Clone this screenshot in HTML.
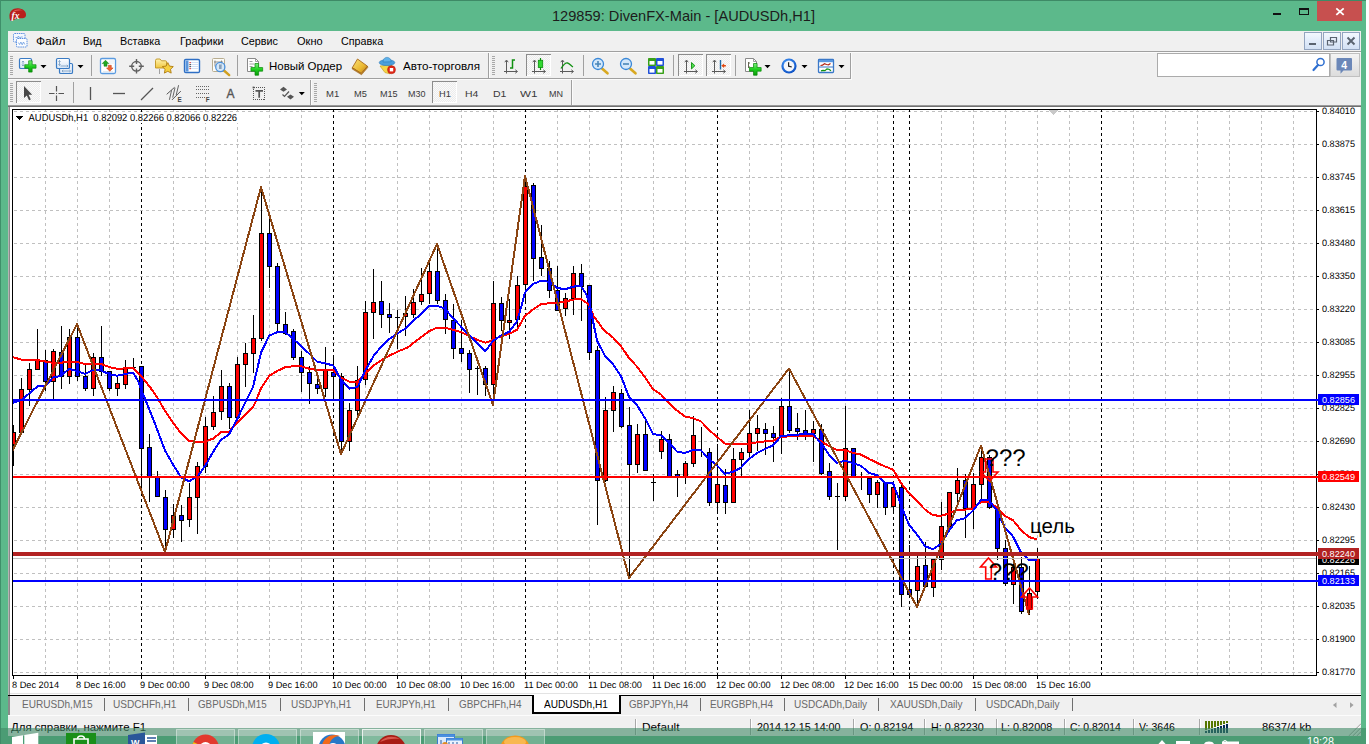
<!DOCTYPE html>
<html><head><meta charset="utf-8"><title>MT4</title>
<style>
*{box-sizing:border-box;margin:0;padding:0}
html,body{width:1369px;height:744px;overflow:hidden;background:#fff}
body{font-family:"Liberation Sans",sans-serif;font-size:12px;color:#000;position:relative}
.abs{position:absolute}
#win{position:absolute;left:0;top:0;width:1366px;height:744px;background:#5cb98b;overflow:hidden}
#topline{position:absolute;left:0;top:0;width:1366px;height:1px;background:#3e8a66}
#title{position:absolute;left:0;top:5px;width:1366px;text-align:center;font-size:15px;line-height:20px;color:#111;letter-spacing:0.1px}
#closeb{position:absolute;left:1317px;top:1px;width:45px;height:20px;background:#c7504f}
#content{position:absolute;left:8px;top:31px;width:1353px;height:705px;background:#f0f0f0}
.menu span{position:absolute;top:35px;font-size:12px;line-height:14px;white-space:nowrap}
.hsep{position:absolute;left:8px;width:1353px;height:1px;background:#a0a0a0}
.vsep{position:absolute;width:1px;background:#a0a0a0}
.grip{position:absolute;width:3px;height:20px;background:repeating-linear-gradient(to bottom,#b0b0b0 0,#b0b0b0 1px,transparent 1px,transparent 2px)}
.tb{position:absolute;font-size:12px;line-height:14px;white-space:nowrap}
.tf span{position:absolute;top:88px;font-size:10px;line-height:12px;color:#333;white-space:nowrap;letter-spacing:0.2px}
.tab{position:absolute;top:697px;font-size:12px;line-height:14px;color:#666;white-space:nowrap}
.tsep{position:absolute;top:697px;width:1px;height:12px;background:#777}
.st{position:absolute;top:720px;font-size:12px;line-height:14px;color:#222;white-space:nowrap}
.ssep{position:absolute;top:715px;width:1px;height:18px;background:#b8b8b8}
</style></head><body>
<div id="win">
<div id="topline"></div>
<div id="closeb"></div>
<div id="content"></div>
<svg class="abs" style="left:0;top:0" width="1369" height="744" viewBox="0 0 1369 744" shape-rendering="crispEdges" font-family="Liberation Sans, sans-serif">
<rect x="8" y="105" width="1353" height="1" fill="#9a9a9a"/>
<rect x="8" y="106" width="1353" height="1" fill="#6f6f6f"/>
<rect x="8" y="107" width="1" height="588" fill="#b4b4b4"/>
<rect x="9" y="107" width="1" height="588" fill="#8a8a8a"/>
<rect x="10" y="107" width="1350" height="586" fill="#ffffff"/>
<rect x="1360" y="107" width="1" height="588" fill="#e3e3e3"/>
<rect x="10" y="693" width="1351" height="1" fill="#e3e3e3"/>
<rect x="10" y="694" width="1351" height="1" fill="#ffffff"/>
<rect x="8" y="695" width="1353" height="1" fill="#000000"/>
<g stroke="#c0c0c0" stroke-width="1" stroke-dasharray="3 3">
<line x1="14" y1="111.5" x2="1316" y2="111.5"/>
<line x1="14" y1="144.5" x2="1316" y2="144.5"/>
<line x1="14" y1="177.5" x2="1316" y2="177.5"/>
<line x1="14" y1="210.5" x2="1316" y2="210.5"/>
<line x1="14" y1="243.5" x2="1316" y2="243.5"/>
<line x1="14" y1="276.5" x2="1316" y2="276.5"/>
<line x1="14" y1="309.5" x2="1316" y2="309.5"/>
<line x1="14" y1="342.5" x2="1316" y2="342.5"/>
<line x1="14" y1="375.5" x2="1316" y2="375.5"/>
<line x1="14" y1="408.5" x2="1316" y2="408.5"/>
<line x1="14" y1="441.5" x2="1316" y2="441.5"/>
<line x1="14" y1="474.5" x2="1316" y2="474.5"/>
<line x1="14" y1="507.5" x2="1316" y2="507.5"/>
<line x1="14" y1="540.5" x2="1316" y2="540.5"/>
<line x1="14" y1="573.5" x2="1316" y2="573.5"/>
<line x1="14" y1="606.5" x2="1316" y2="606.5"/>
<line x1="14" y1="639.5" x2="1316" y2="639.5"/>
<line x1="14" y1="672.5" x2="1316" y2="672.5"/>
<line x1="45.5" y1="109" x2="45.5" y2="675" stroke-dashoffset="0"/>
<line x1="77.5" y1="109" x2="77.5" y2="675" stroke-dashoffset="0"/>
<line x1="109.5" y1="109" x2="109.5" y2="675" stroke-dashoffset="0"/>
<line x1="173.5" y1="109" x2="173.5" y2="675" stroke-dashoffset="0"/>
<line x1="205.5" y1="109" x2="205.5" y2="675" stroke-dashoffset="0"/>
<line x1="237.5" y1="109" x2="237.5" y2="675" stroke-dashoffset="0"/>
<line x1="269.5" y1="109" x2="269.5" y2="675" stroke-dashoffset="0"/>
<line x1="301.5" y1="109" x2="301.5" y2="675" stroke-dashoffset="0"/>
<line x1="365.5" y1="109" x2="365.5" y2="675" stroke-dashoffset="0"/>
<line x1="397.5" y1="109" x2="397.5" y2="675" stroke-dashoffset="0"/>
<line x1="429.5" y1="109" x2="429.5" y2="675" stroke-dashoffset="0"/>
<line x1="461.5" y1="109" x2="461.5" y2="675" stroke-dashoffset="0"/>
<line x1="493.5" y1="109" x2="493.5" y2="675" stroke-dashoffset="0"/>
<line x1="557.5" y1="109" x2="557.5" y2="675" stroke-dashoffset="0"/>
<line x1="589.5" y1="109" x2="589.5" y2="675" stroke-dashoffset="0"/>
<line x1="621.5" y1="109" x2="621.5" y2="675" stroke-dashoffset="0"/>
<line x1="653.5" y1="109" x2="653.5" y2="675" stroke-dashoffset="0"/>
<line x1="685.5" y1="109" x2="685.5" y2="675" stroke-dashoffset="0"/>
<line x1="749.5" y1="109" x2="749.5" y2="675" stroke-dashoffset="0"/>
<line x1="781.5" y1="109" x2="781.5" y2="675" stroke-dashoffset="0"/>
<line x1="813.5" y1="109" x2="813.5" y2="675" stroke-dashoffset="0"/>
<line x1="845.5" y1="109" x2="845.5" y2="675" stroke-dashoffset="0"/>
<line x1="877.5" y1="109" x2="877.5" y2="675" stroke-dashoffset="0"/>
<line x1="941.5" y1="109" x2="941.5" y2="675" stroke-dashoffset="0"/>
<line x1="973.5" y1="109" x2="973.5" y2="675" stroke-dashoffset="0"/>
<line x1="1005.5" y1="109" x2="1005.5" y2="675" stroke-dashoffset="0"/>
<line x1="1037.5" y1="109" x2="1037.5" y2="675" stroke-dashoffset="0"/>
<line x1="1069.5" y1="109" x2="1069.5" y2="675" stroke-dashoffset="0"/>
<line x1="1133.5" y1="109" x2="1133.5" y2="675" stroke-dashoffset="0"/>
<line x1="1165.5" y1="109" x2="1165.5" y2="675" stroke-dashoffset="0"/>
<line x1="1197.5" y1="109" x2="1197.5" y2="675" stroke-dashoffset="0"/>
<line x1="1229.5" y1="109" x2="1229.5" y2="675" stroke-dashoffset="0"/>
<line x1="1261.5" y1="109" x2="1261.5" y2="675" stroke-dashoffset="0"/>
<line x1="1293.5" y1="109" x2="1293.5" y2="675" stroke-dashoffset="0"/>
</g>
<g stroke="#000" stroke-width="1" stroke-dasharray="3 3">
<line x1="141.5" y1="109" x2="141.5" y2="675"/>
<line x1="333.5" y1="109" x2="333.5" y2="675"/>
<line x1="525.5" y1="109" x2="525.5" y2="675"/>
<line x1="717.5" y1="109" x2="717.5" y2="675"/>
<line x1="893.5" y1="109" x2="893.5" y2="675"/>
<line x1="909.5" y1="109" x2="909.5" y2="675"/>
<line x1="1101.5" y1="109" x2="1101.5" y2="675"/>
</g>
<path d="M1049 110 L1058 110 L1053.5 115 Z" fill="#c8c8c8"/>
<rect x="12" y="109" width="1305" height="1" fill="#000"/>
<rect x="12" y="675" width="1305" height="1" fill="#000"/>
<rect x="12" y="109" width="1" height="567" fill="#000"/>
<rect x="1316" y="109" width="1" height="567" fill="#000"/>
<rect x="1317" y="111" width="2" height="1" fill="#000"/>
<rect x="1317" y="144" width="2" height="1" fill="#000"/>
<rect x="1317" y="177" width="2" height="1" fill="#000"/>
<rect x="1317" y="210" width="2" height="1" fill="#000"/>
<rect x="1317" y="243" width="2" height="1" fill="#000"/>
<rect x="1317" y="276" width="2" height="1" fill="#000"/>
<rect x="1317" y="309" width="2" height="1" fill="#000"/>
<rect x="1317" y="342" width="2" height="1" fill="#000"/>
<rect x="1317" y="375" width="2" height="1" fill="#000"/>
<rect x="1317" y="408" width="2" height="1" fill="#000"/>
<rect x="1317" y="441" width="2" height="1" fill="#000"/>
<rect x="1317" y="474" width="2" height="1" fill="#000"/>
<rect x="1317" y="507" width="2" height="1" fill="#000"/>
<rect x="1317" y="540" width="2" height="1" fill="#000"/>
<rect x="1317" y="573" width="2" height="1" fill="#000"/>
<rect x="1317" y="606" width="2" height="1" fill="#000"/>
<rect x="1317" y="639" width="2" height="1" fill="#000"/>
<rect x="1317" y="672" width="2" height="1" fill="#000"/>
<rect x="13" y="676" width="1" height="3" fill="#000"/>
<rect x="77" y="676" width="1" height="3" fill="#000"/>
<rect x="141" y="676" width="1" height="3" fill="#000"/>
<rect x="205" y="676" width="1" height="3" fill="#000"/>
<rect x="269" y="676" width="1" height="3" fill="#000"/>
<rect x="333" y="676" width="1" height="3" fill="#000"/>
<rect x="397" y="676" width="1" height="3" fill="#000"/>
<rect x="461" y="676" width="1" height="3" fill="#000"/>
<rect x="525" y="676" width="1" height="3" fill="#000"/>
<rect x="589" y="676" width="1" height="3" fill="#000"/>
<rect x="653" y="676" width="1" height="3" fill="#000"/>
<rect x="717" y="676" width="1" height="3" fill="#000"/>
<rect x="781" y="676" width="1" height="3" fill="#000"/>
<rect x="845" y="676" width="1" height="3" fill="#000"/>
<rect x="909" y="676" width="1" height="3" fill="#000"/>
<rect x="973" y="676" width="1" height="3" fill="#000"/>
<rect x="1037" y="676" width="1" height="3" fill="#000"/>
<clipPath id="cp"><rect x="13" y="110" width="1303" height="565"/></clipPath>
<g clip-path="url(#cp)">
<rect x="13" y="425" width="1" height="41" fill="#000"/>
<rect x="11" y="432" width="5" height="13" fill="#000"/>
<rect x="12" y="433" width="3" height="11" fill="#ff0000"/>
<rect x="21" y="378" width="1" height="55" fill="#000"/>
<rect x="19" y="389" width="5" height="44" fill="#000"/>
<rect x="20" y="390" width="3" height="42" fill="#ff0000"/>
<rect x="29" y="363" width="1" height="43" fill="#000"/>
<rect x="27" y="369" width="5" height="21" fill="#000"/>
<rect x="28" y="370" width="3" height="19" fill="#ff0000"/>
<rect x="37" y="329" width="1" height="41" fill="#000"/>
<rect x="35" y="360" width="5" height="10" fill="#000"/>
<rect x="36" y="361" width="3" height="8" fill="#ff0000"/>
<rect x="45" y="350" width="1" height="41" fill="#000"/>
<rect x="43" y="360" width="5" height="22" fill="#000"/>
<rect x="44" y="361" width="3" height="20" fill="#0000ff"/>
<rect x="53" y="349" width="1" height="51" fill="#000"/>
<rect x="51" y="351" width="5" height="31" fill="#000"/>
<rect x="52" y="352" width="3" height="29" fill="#ff0000"/>
<rect x="61" y="326" width="1" height="63" fill="#000"/>
<rect x="59" y="352" width="5" height="25" fill="#000"/>
<rect x="60" y="353" width="3" height="23" fill="#0000ff"/>
<rect x="69" y="329" width="1" height="55" fill="#000"/>
<rect x="67" y="337" width="5" height="40" fill="#000"/>
<rect x="68" y="338" width="3" height="38" fill="#ff0000"/>
<rect x="77" y="324" width="1" height="57" fill="#000"/>
<rect x="75" y="337" width="5" height="40" fill="#000"/>
<rect x="76" y="338" width="3" height="38" fill="#0000ff"/>
<rect x="85" y="364" width="1" height="27" fill="#000"/>
<rect x="83" y="376" width="5" height="13" fill="#000"/>
<rect x="84" y="377" width="3" height="11" fill="#0000ff"/>
<rect x="93" y="353" width="1" height="43" fill="#000"/>
<rect x="91" y="357" width="5" height="32" fill="#000"/>
<rect x="92" y="358" width="3" height="30" fill="#ff0000"/>
<rect x="101" y="326" width="1" height="50" fill="#000"/>
<rect x="99" y="357" width="5" height="15" fill="#000"/>
<rect x="100" y="358" width="3" height="13" fill="#0000ff"/>
<rect x="109" y="371" width="1" height="20" fill="#000"/>
<rect x="107" y="371" width="5" height="18" fill="#000"/>
<rect x="108" y="372" width="3" height="16" fill="#0000ff"/>
<rect x="117" y="377" width="1" height="19" fill="#000"/>
<rect x="115" y="383" width="5" height="6" fill="#000"/>
<rect x="116" y="384" width="3" height="4" fill="#ff0000"/>
<rect x="125" y="360" width="1" height="29" fill="#000"/>
<rect x="123" y="367" width="5" height="18" fill="#000"/>
<rect x="124" y="368" width="3" height="16" fill="#ff0000"/>
<rect x="133" y="358" width="1" height="12" fill="#000"/>
<rect x="131" y="367" width="5" height="1" fill="#000"/>
<rect x="141" y="366" width="1" height="127" fill="#000"/>
<rect x="139" y="366" width="5" height="83" fill="#000"/>
<rect x="140" y="367" width="3" height="81" fill="#0000ff"/>
<rect x="149" y="434" width="1" height="68" fill="#000"/>
<rect x="147" y="447" width="5" height="30" fill="#000"/>
<rect x="148" y="448" width="3" height="28" fill="#0000ff"/>
<rect x="157" y="471" width="1" height="26" fill="#000"/>
<rect x="155" y="476" width="5" height="21" fill="#000"/>
<rect x="156" y="477" width="3" height="19" fill="#0000ff"/>
<rect x="165" y="490" width="1" height="63" fill="#000"/>
<rect x="163" y="497" width="5" height="33" fill="#000"/>
<rect x="164" y="498" width="3" height="31" fill="#0000ff"/>
<rect x="173" y="504" width="1" height="34" fill="#000"/>
<rect x="171" y="515" width="5" height="15" fill="#000"/>
<rect x="172" y="516" width="3" height="13" fill="#ff0000"/>
<rect x="181" y="505" width="1" height="37" fill="#000"/>
<rect x="179" y="515" width="5" height="6" fill="#000"/>
<rect x="180" y="516" width="3" height="4" fill="#0000ff"/>
<rect x="189" y="483" width="1" height="44" fill="#000"/>
<rect x="187" y="497" width="5" height="23" fill="#000"/>
<rect x="188" y="498" width="3" height="21" fill="#ff0000"/>
<rect x="197" y="462" width="1" height="72" fill="#000"/>
<rect x="195" y="466" width="5" height="32" fill="#000"/>
<rect x="196" y="467" width="3" height="30" fill="#ff0000"/>
<rect x="205" y="417" width="1" height="56" fill="#000"/>
<rect x="203" y="426" width="5" height="41" fill="#000"/>
<rect x="204" y="427" width="3" height="39" fill="#ff0000"/>
<rect x="213" y="396" width="1" height="34" fill="#000"/>
<rect x="211" y="412" width="5" height="15" fill="#000"/>
<rect x="212" y="413" width="3" height="13" fill="#ff0000"/>
<rect x="221" y="370" width="1" height="50" fill="#000"/>
<rect x="219" y="386" width="5" height="26" fill="#000"/>
<rect x="220" y="387" width="3" height="24" fill="#ff0000"/>
<rect x="229" y="383" width="1" height="46" fill="#000"/>
<rect x="227" y="386" width="5" height="32" fill="#000"/>
<rect x="228" y="387" width="3" height="30" fill="#0000ff"/>
<rect x="237" y="357" width="1" height="61" fill="#000"/>
<rect x="235" y="364" width="5" height="54" fill="#000"/>
<rect x="236" y="365" width="3" height="52" fill="#ff0000"/>
<rect x="245" y="343" width="1" height="44" fill="#000"/>
<rect x="243" y="353" width="5" height="12" fill="#000"/>
<rect x="244" y="354" width="3" height="10" fill="#ff0000"/>
<rect x="253" y="315" width="1" height="58" fill="#000"/>
<rect x="251" y="338" width="5" height="16" fill="#000"/>
<rect x="252" y="339" width="3" height="14" fill="#ff0000"/>
<rect x="261" y="187" width="1" height="154" fill="#000"/>
<rect x="259" y="233" width="5" height="106" fill="#000"/>
<rect x="260" y="234" width="3" height="104" fill="#ff0000"/>
<rect x="269" y="217" width="1" height="71" fill="#000"/>
<rect x="267" y="233" width="5" height="34" fill="#000"/>
<rect x="268" y="234" width="3" height="32" fill="#0000ff"/>
<rect x="277" y="263" width="1" height="70" fill="#000"/>
<rect x="275" y="266" width="5" height="58" fill="#000"/>
<rect x="276" y="267" width="3" height="56" fill="#0000ff"/>
<rect x="285" y="312" width="1" height="23" fill="#000"/>
<rect x="283" y="324" width="5" height="10" fill="#000"/>
<rect x="284" y="325" width="3" height="8" fill="#0000ff"/>
<rect x="293" y="329" width="1" height="31" fill="#000"/>
<rect x="291" y="331" width="5" height="27" fill="#000"/>
<rect x="292" y="332" width="3" height="25" fill="#0000ff"/>
<rect x="301" y="351" width="1" height="41" fill="#000"/>
<rect x="299" y="357" width="5" height="16" fill="#000"/>
<rect x="300" y="358" width="3" height="14" fill="#0000ff"/>
<rect x="309" y="366" width="1" height="38" fill="#000"/>
<rect x="307" y="372" width="5" height="12" fill="#000"/>
<rect x="308" y="373" width="3" height="10" fill="#0000ff"/>
<rect x="317" y="379" width="1" height="15" fill="#000"/>
<rect x="315" y="384" width="5" height="5" fill="#000"/>
<rect x="316" y="385" width="3" height="3" fill="#0000ff"/>
<rect x="325" y="347" width="1" height="50" fill="#000"/>
<rect x="323" y="370" width="5" height="19" fill="#000"/>
<rect x="324" y="371" width="3" height="17" fill="#ff0000"/>
<rect x="333" y="355" width="1" height="45" fill="#000"/>
<rect x="331" y="372" width="5" height="5" fill="#000"/>
<rect x="332" y="373" width="3" height="3" fill="#0000ff"/>
<rect x="341" y="373" width="1" height="82" fill="#000"/>
<rect x="339" y="376" width="5" height="66" fill="#000"/>
<rect x="340" y="377" width="3" height="64" fill="#0000ff"/>
<rect x="349" y="403" width="1" height="48" fill="#000"/>
<rect x="347" y="410" width="5" height="32" fill="#000"/>
<rect x="348" y="411" width="3" height="30" fill="#ff0000"/>
<rect x="357" y="366" width="1" height="51" fill="#000"/>
<rect x="355" y="380" width="5" height="31" fill="#000"/>
<rect x="356" y="381" width="3" height="29" fill="#ff0000"/>
<rect x="365" y="301" width="1" height="84" fill="#000"/>
<rect x="363" y="312" width="5" height="68" fill="#000"/>
<rect x="364" y="313" width="3" height="66" fill="#ff0000"/>
<rect x="373" y="269" width="1" height="70" fill="#000"/>
<rect x="371" y="302" width="5" height="11" fill="#000"/>
<rect x="372" y="303" width="3" height="9" fill="#ff0000"/>
<rect x="381" y="281" width="1" height="47" fill="#000"/>
<rect x="379" y="301" width="5" height="14" fill="#000"/>
<rect x="380" y="302" width="3" height="12" fill="#0000ff"/>
<rect x="389" y="303" width="1" height="30" fill="#000"/>
<rect x="387" y="314" width="5" height="4" fill="#000"/>
<rect x="388" y="315" width="3" height="2" fill="#0000ff"/>
<rect x="397" y="310" width="1" height="39" fill="#000"/>
<rect x="395" y="317" width="5" height="1" fill="#000"/>
<rect x="405" y="296" width="1" height="40" fill="#000"/>
<rect x="403" y="313" width="5" height="4" fill="#000"/>
<rect x="404" y="314" width="3" height="2" fill="#ff0000"/>
<rect x="413" y="289" width="1" height="29" fill="#000"/>
<rect x="411" y="302" width="5" height="13" fill="#000"/>
<rect x="412" y="303" width="3" height="11" fill="#ff0000"/>
<rect x="421" y="268" width="1" height="37" fill="#000"/>
<rect x="419" y="294" width="5" height="8" fill="#000"/>
<rect x="420" y="295" width="3" height="6" fill="#ff0000"/>
<rect x="429" y="263" width="1" height="41" fill="#000"/>
<rect x="427" y="271" width="5" height="23" fill="#000"/>
<rect x="428" y="272" width="3" height="21" fill="#ff0000"/>
<rect x="437" y="245" width="1" height="59" fill="#000"/>
<rect x="435" y="271" width="5" height="30" fill="#000"/>
<rect x="436" y="272" width="3" height="28" fill="#0000ff"/>
<rect x="445" y="294" width="1" height="40" fill="#000"/>
<rect x="443" y="300" width="5" height="20" fill="#000"/>
<rect x="444" y="301" width="3" height="18" fill="#0000ff"/>
<rect x="453" y="304" width="1" height="55" fill="#000"/>
<rect x="451" y="320" width="5" height="29" fill="#000"/>
<rect x="452" y="321" width="3" height="27" fill="#0000ff"/>
<rect x="461" y="320" width="1" height="42" fill="#000"/>
<rect x="459" y="348" width="5" height="6" fill="#000"/>
<rect x="460" y="349" width="3" height="4" fill="#0000ff"/>
<rect x="469" y="350" width="1" height="43" fill="#000"/>
<rect x="467" y="353" width="5" height="17" fill="#000"/>
<rect x="468" y="354" width="3" height="15" fill="#0000ff"/>
<rect x="477" y="366" width="1" height="29" fill="#000"/>
<rect x="475" y="368" width="5" height="1" fill="#000"/>
<rect x="485" y="366" width="1" height="30" fill="#000"/>
<rect x="483" y="368" width="5" height="17" fill="#000"/>
<rect x="484" y="369" width="3" height="15" fill="#0000ff"/>
<rect x="493" y="281" width="1" height="125" fill="#000"/>
<rect x="491" y="303" width="5" height="82" fill="#000"/>
<rect x="492" y="304" width="3" height="80" fill="#ff0000"/>
<rect x="501" y="297" width="1" height="34" fill="#000"/>
<rect x="499" y="303" width="5" height="18" fill="#000"/>
<rect x="500" y="304" width="3" height="16" fill="#0000ff"/>
<rect x="509" y="299" width="1" height="40" fill="#000"/>
<rect x="507" y="320" width="5" height="3" fill="#000"/>
<rect x="508" y="321" width="3" height="1" fill="#ff0000"/>
<rect x="517" y="276" width="1" height="55" fill="#000"/>
<rect x="515" y="285" width="5" height="35" fill="#000"/>
<rect x="516" y="286" width="3" height="33" fill="#ff0000"/>
<rect x="525" y="176" width="1" height="128" fill="#000"/>
<rect x="523" y="186" width="5" height="99" fill="#000"/>
<rect x="524" y="187" width="3" height="97" fill="#ff0000"/>
<rect x="533" y="183" width="1" height="98" fill="#000"/>
<rect x="531" y="185" width="5" height="74" fill="#000"/>
<rect x="532" y="186" width="3" height="72" fill="#0000ff"/>
<rect x="541" y="225" width="1" height="51" fill="#000"/>
<rect x="539" y="257" width="5" height="12" fill="#000"/>
<rect x="540" y="258" width="3" height="10" fill="#0000ff"/>
<rect x="549" y="261" width="1" height="37" fill="#000"/>
<rect x="547" y="268" width="5" height="23" fill="#000"/>
<rect x="548" y="269" width="3" height="21" fill="#0000ff"/>
<rect x="557" y="266" width="1" height="45" fill="#000"/>
<rect x="555" y="290" width="5" height="21" fill="#000"/>
<rect x="556" y="291" width="3" height="19" fill="#0000ff"/>
<rect x="565" y="293" width="1" height="23" fill="#000"/>
<rect x="563" y="298" width="5" height="11" fill="#000"/>
<rect x="564" y="299" width="3" height="9" fill="#ff0000"/>
<rect x="573" y="266" width="1" height="49" fill="#000"/>
<rect x="571" y="273" width="5" height="26" fill="#000"/>
<rect x="572" y="274" width="3" height="24" fill="#ff0000"/>
<rect x="581" y="264" width="1" height="57" fill="#000"/>
<rect x="579" y="273" width="5" height="14" fill="#000"/>
<rect x="580" y="274" width="3" height="12" fill="#0000ff"/>
<rect x="589" y="285" width="1" height="75" fill="#000"/>
<rect x="587" y="285" width="5" height="68" fill="#000"/>
<rect x="588" y="286" width="3" height="66" fill="#0000ff"/>
<rect x="597" y="346" width="1" height="179" fill="#000"/>
<rect x="595" y="350" width="5" height="131" fill="#000"/>
<rect x="596" y="351" width="3" height="129" fill="#0000ff"/>
<rect x="605" y="397" width="1" height="85" fill="#000"/>
<rect x="603" y="410" width="5" height="71" fill="#000"/>
<rect x="604" y="411" width="3" height="69" fill="#ff0000"/>
<rect x="613" y="386" width="1" height="46" fill="#000"/>
<rect x="611" y="392" width="5" height="19" fill="#000"/>
<rect x="612" y="393" width="3" height="17" fill="#ff0000"/>
<rect x="621" y="389" width="1" height="39" fill="#000"/>
<rect x="619" y="393" width="5" height="34" fill="#000"/>
<rect x="620" y="394" width="3" height="32" fill="#0000ff"/>
<rect x="629" y="407" width="1" height="172" fill="#000"/>
<rect x="627" y="425" width="5" height="40" fill="#000"/>
<rect x="628" y="426" width="3" height="38" fill="#0000ff"/>
<rect x="637" y="424" width="1" height="49" fill="#000"/>
<rect x="635" y="434" width="5" height="31" fill="#000"/>
<rect x="636" y="435" width="3" height="29" fill="#ff0000"/>
<rect x="645" y="421" width="1" height="50" fill="#000"/>
<rect x="643" y="434" width="5" height="37" fill="#000"/>
<rect x="644" y="435" width="3" height="35" fill="#0000ff"/>
<rect x="653" y="474" width="1" height="27" fill="#000"/>
<rect x="651" y="482" width="5" height="1" fill="#000"/>
<rect x="661" y="431" width="1" height="28" fill="#000"/>
<rect x="659" y="439" width="5" height="13" fill="#000"/>
<rect x="660" y="440" width="3" height="11" fill="#ff0000"/>
<rect x="669" y="434" width="1" height="43" fill="#000"/>
<rect x="667" y="439" width="5" height="38" fill="#000"/>
<rect x="668" y="440" width="3" height="36" fill="#0000ff"/>
<rect x="677" y="470" width="1" height="27" fill="#000"/>
<rect x="675" y="474" width="5" height="3" fill="#000"/>
<rect x="676" y="475" width="3" height="1" fill="#0000ff"/>
<rect x="685" y="461" width="1" height="23" fill="#000"/>
<rect x="683" y="463" width="5" height="14" fill="#000"/>
<rect x="684" y="464" width="3" height="12" fill="#ff0000"/>
<rect x="693" y="416" width="1" height="51" fill="#000"/>
<rect x="691" y="435" width="5" height="29" fill="#000"/>
<rect x="692" y="436" width="3" height="27" fill="#ff0000"/>
<rect x="701" y="427" width="1" height="30" fill="#000"/>
<rect x="709" y="448" width="1" height="58" fill="#000"/>
<rect x="707" y="452" width="5" height="51" fill="#000"/>
<rect x="708" y="453" width="3" height="49" fill="#0000ff"/>
<rect x="717" y="444" width="1" height="70" fill="#000"/>
<rect x="715" y="484" width="5" height="19" fill="#000"/>
<rect x="716" y="485" width="3" height="17" fill="#ff0000"/>
<rect x="725" y="469" width="1" height="45" fill="#000"/>
<rect x="723" y="485" width="5" height="18" fill="#000"/>
<rect x="724" y="486" width="3" height="16" fill="#0000ff"/>
<rect x="733" y="448" width="1" height="55" fill="#000"/>
<rect x="731" y="459" width="5" height="44" fill="#000"/>
<rect x="732" y="460" width="3" height="42" fill="#ff0000"/>
<rect x="741" y="448" width="1" height="29" fill="#000"/>
<rect x="739" y="452" width="5" height="8" fill="#000"/>
<rect x="740" y="453" width="3" height="6" fill="#ff0000"/>
<rect x="749" y="410" width="1" height="49" fill="#000"/>
<rect x="747" y="433" width="5" height="20" fill="#000"/>
<rect x="748" y="434" width="3" height="18" fill="#ff0000"/>
<rect x="757" y="415" width="1" height="36" fill="#000"/>
<rect x="755" y="428" width="5" height="6" fill="#000"/>
<rect x="756" y="429" width="3" height="4" fill="#ff0000"/>
<rect x="765" y="423" width="1" height="32" fill="#000"/>
<rect x="763" y="429" width="5" height="5" fill="#000"/>
<rect x="764" y="430" width="3" height="3" fill="#0000ff"/>
<rect x="773" y="426" width="1" height="36" fill="#000"/>
<rect x="771" y="433" width="5" height="5" fill="#000"/>
<rect x="772" y="434" width="3" height="3" fill="#0000ff"/>
<rect x="781" y="398" width="1" height="56" fill="#000"/>
<rect x="779" y="406" width="5" height="31" fill="#000"/>
<rect x="780" y="407" width="3" height="29" fill="#ff0000"/>
<rect x="789" y="369" width="1" height="64" fill="#000"/>
<rect x="787" y="406" width="5" height="25" fill="#000"/>
<rect x="788" y="407" width="3" height="23" fill="#0000ff"/>
<rect x="797" y="413" width="1" height="27" fill="#000"/>
<rect x="795" y="428" width="5" height="4" fill="#000"/>
<rect x="796" y="429" width="3" height="2" fill="#0000ff"/>
<rect x="805" y="410" width="1" height="30" fill="#000"/>
<rect x="803" y="430" width="5" height="4" fill="#000"/>
<rect x="804" y="431" width="3" height="2" fill="#0000ff"/>
<rect x="813" y="421" width="1" height="41" fill="#000"/>
<rect x="811" y="429" width="5" height="5" fill="#000"/>
<rect x="812" y="430" width="3" height="3" fill="#ff0000"/>
<rect x="821" y="424" width="1" height="51" fill="#000"/>
<rect x="819" y="429" width="5" height="45" fill="#000"/>
<rect x="820" y="430" width="3" height="43" fill="#0000ff"/>
<rect x="829" y="463" width="1" height="37" fill="#000"/>
<rect x="827" y="471" width="5" height="26" fill="#000"/>
<rect x="828" y="472" width="3" height="24" fill="#0000ff"/>
<rect x="837" y="483" width="1" height="67" fill="#000"/>
<rect x="835" y="496" width="5" height="1" fill="#000"/>
<rect x="845" y="406" width="1" height="95" fill="#000"/>
<rect x="843" y="448" width="5" height="49" fill="#000"/>
<rect x="844" y="449" width="3" height="47" fill="#ff0000"/>
<rect x="853" y="448" width="1" height="29" fill="#000"/>
<rect x="851" y="448" width="5" height="29" fill="#000"/>
<rect x="852" y="449" width="3" height="27" fill="#0000ff"/>
<rect x="861" y="472" width="1" height="18" fill="#000"/>
<rect x="859" y="477" width="5" height="1" fill="#000"/>
<rect x="869" y="476" width="1" height="27" fill="#000"/>
<rect x="867" y="478" width="5" height="17" fill="#000"/>
<rect x="868" y="479" width="3" height="15" fill="#0000ff"/>
<rect x="877" y="480" width="1" height="28" fill="#000"/>
<rect x="875" y="482" width="5" height="13" fill="#000"/>
<rect x="876" y="483" width="3" height="11" fill="#ff0000"/>
<rect x="885" y="482" width="1" height="33" fill="#000"/>
<rect x="883" y="482" width="5" height="26" fill="#000"/>
<rect x="884" y="483" width="3" height="24" fill="#0000ff"/>
<rect x="893" y="481" width="1" height="30" fill="#000"/>
<rect x="891" y="487" width="5" height="20" fill="#000"/>
<rect x="892" y="488" width="3" height="18" fill="#ff0000"/>
<rect x="901" y="483" width="1" height="124" fill="#000"/>
<rect x="899" y="487" width="5" height="108" fill="#000"/>
<rect x="900" y="488" width="3" height="106" fill="#0000ff"/>
<rect x="909" y="545" width="1" height="50" fill="#000"/>
<rect x="907" y="589" width="5" height="6" fill="#000"/>
<rect x="908" y="590" width="3" height="4" fill="#0000ff"/>
<rect x="917" y="556" width="1" height="52" fill="#000"/>
<rect x="915" y="566" width="5" height="25" fill="#000"/>
<rect x="916" y="567" width="3" height="23" fill="#ff0000"/>
<rect x="925" y="542" width="1" height="46" fill="#000"/>
<rect x="923" y="565" width="5" height="22" fill="#000"/>
<rect x="924" y="566" width="3" height="20" fill="#0000ff"/>
<rect x="933" y="558" width="1" height="39" fill="#000"/>
<rect x="931" y="559" width="5" height="29" fill="#000"/>
<rect x="932" y="560" width="3" height="27" fill="#ff0000"/>
<rect x="941" y="502" width="1" height="68" fill="#000"/>
<rect x="939" y="526" width="5" height="34" fill="#000"/>
<rect x="940" y="527" width="3" height="32" fill="#ff0000"/>
<rect x="949" y="492" width="1" height="36" fill="#000"/>
<rect x="947" y="492" width="5" height="35" fill="#000"/>
<rect x="948" y="493" width="3" height="33" fill="#ff0000"/>
<rect x="957" y="468" width="1" height="36" fill="#000"/>
<rect x="955" y="480" width="5" height="14" fill="#000"/>
<rect x="956" y="481" width="3" height="12" fill="#ff0000"/>
<rect x="965" y="474" width="1" height="64" fill="#000"/>
<rect x="963" y="480" width="5" height="29" fill="#000"/>
<rect x="964" y="481" width="3" height="27" fill="#0000ff"/>
<rect x="973" y="473" width="1" height="56" fill="#000"/>
<rect x="971" y="484" width="5" height="25" fill="#000"/>
<rect x="972" y="485" width="3" height="23" fill="#ff0000"/>
<rect x="981" y="445" width="1" height="55" fill="#000"/>
<rect x="979" y="457" width="5" height="28" fill="#000"/>
<rect x="980" y="458" width="3" height="26" fill="#ff0000"/>
<rect x="989" y="455" width="1" height="54" fill="#000"/>
<rect x="987" y="457" width="5" height="51" fill="#000"/>
<rect x="988" y="458" width="3" height="49" fill="#0000ff"/>
<rect x="997" y="506" width="1" height="54" fill="#000"/>
<rect x="995" y="507" width="5" height="42" fill="#000"/>
<rect x="996" y="508" width="3" height="40" fill="#0000ff"/>
<rect x="1005" y="540" width="1" height="46" fill="#000"/>
<rect x="1003" y="548" width="5" height="36" fill="#000"/>
<rect x="1004" y="549" width="3" height="34" fill="#0000ff"/>
<rect x="1013" y="561" width="1" height="43" fill="#000"/>
<rect x="1011" y="567" width="5" height="18" fill="#000"/>
<rect x="1012" y="568" width="3" height="16" fill="#ff0000"/>
<rect x="1021" y="557" width="1" height="57" fill="#000"/>
<rect x="1019" y="567" width="5" height="45" fill="#000"/>
<rect x="1020" y="568" width="3" height="43" fill="#0000ff"/>
<rect x="1029" y="566" width="1" height="49" fill="#000"/>
<rect x="1027" y="593" width="5" height="17" fill="#000"/>
<rect x="1028" y="594" width="3" height="15" fill="#ff0000"/>
<rect x="1037" y="548" width="1" height="51" fill="#000"/>
<rect x="1035" y="558" width="5" height="34" fill="#000"/>
<rect x="1036" y="559" width="3" height="32" fill="#ff0000"/>
<polyline fill="none" stroke="#ff0000" stroke-width="2" stroke-linejoin="round" points="12,357 22,359.8 37,360 53,362.8 66,362.4 77,362 85,364 101,364 109,367 117,368.8 133,368 141,376 150,387 157.5,398 165,410.8 173,422.6 181,433.3 189,440.9 197.5,442 205,441.5 213.4,438.5 221,432.3 229,431.7 237,422.6 245,415 253,406.9 256.4,400 261,388.2 269.3,375.7 277.2,371 285.4,367.1 293.4,366.2 301.3,366.2 309.3,368.8 317.2,369.9 325.4,369.9 333.4,370.3 341.3,377.8 349.3,381.7 357.5,381.7 365.6,373.1 373.6,365.6 381.5,360.2 389.7,355.5 397.7,351.6 408,347.3 413,343.3 429,331.3 437,327.6 445,327.6 453,329.8 461,332 469.2,336.2 477.4,339.9 485.4,342.7 493.3,339.9 501,336.2 509,334 517,329.8 525,315.8 533,309.6 541,304.2 549,303.3 557,302.9 565,301.7 573,299.6 581,299 589,304.7 593.5,316 600,324.6 603.7,330 613,337.5 621,346.1 629,358 637,366.6 645,377.3 653,389.1 661,394.5 669,403.1 677,410.6 685,416.5 693,418.2 701,421.4 709,430 717,436.9 725,443.5 733,444 741,444.4 749,444 757,442.3 765,441.4 773,440.7 781,437 789,436.3 797,435.7 805,435.7 813,435.7 821,441.3 829,446 837,449.9 845,449.9 853,452.9 861,454.6 869,458.9 877,462.8 885,466.5 893,469.5 901,483.1 909,493 917,501 925,509.6 933,515.2 941,515.9 949,513.5 957,509.9 965,509.6 973,508.5 981,502 989,502 997,507.4 1005,516 1013,520.3 1021,530 1029,537.1 1037,539.2"/>
<polyline fill="none" stroke="#0000ff" stroke-width="2" stroke-linejoin="round" points="12,403 22,400 29,393.5 38,386 45.6,386 53,377.4 61,376 69,368.8 77,371 85,374 93,370 101,370.5 109,374 117,375.7 125,374 133,372.7 138,380.6 142.4,392.5 146.7,403 154.2,421.5 165,450.5 173,464.5 181,477.4 189,481.3 197.5,476.3 205.4,465.6 213,452 221,439.8 229,434.4 237,419.4 245,403.2 253,387.1 261,352.7 269.3,335.5 277.2,332.3 285.4,332.3 293.4,339.1 301.3,346.2 309.3,353.8 317.2,361.7 325.4,363.4 333.4,365.6 341.3,380.6 349.3,388.6 357.5,387.1 365.6,369.9 373.6,355.9 381.5,346.2 389.7,338.7 397.7,333.3 405.6,328.4 413,321 421,314 429,306 437,305.6 445,308.8 453,318.2 461,326.6 469.2,335.2 477.4,343.3 485.4,351.3 493.3,340.5 501,335.6 509,331.9 517,321.5 521.5,305.8 525,292.5 533,284 541,280.8 549,281.8 557,287.8 565,289.4 573,286.6 581,286.1 585,292 589,300.5 593.5,323.5 597,340.6 605,355.8 613,364.4 621,376.2 629,396.7 637,405.3 645,418.2 653,433.9 661,435.4 669,442.9 677,451.5 685,453 693,450 701,450.4 709,459 717,465.5 725,473.7 733,471.9 741,467.6 749,459 757,453 765,449 773,445.3 781,436.3 789,435.3 797,434.6 805,434.2 813,434.2 821,442.8 829,454.6 837,462.8 845,460.6 853,463.2 861,465.8 869,472.9 877,475.2 885,482.8 893,483.2 897.6,495.5 901,505.3 909,524.8 917,534.5 925,546.3 933,549.1 941,544.1 949,530.6 957,520.2 965,518.2 973,510.6 981,499.9 989,500.5 997,510.6 1005,527.8 1013,536.5 1021,552.6 1029,560.1 1037,560.1"/>
<polyline fill="none" stroke="#8b4513" stroke-width="2" stroke-linejoin="round" points="5,465 77,324 165,552 261,187 341,454 437,244 493,405 525,176 629,578 789,368.5 917,607 981,445.5 1029,614.5"/>
</g>
<rect x="13" y="399" width="1305" height="2" fill="#0000ff"/>
<rect x="13" y="476" width="1305" height="2" fill="#ff0000"/>
<rect x="13" y="558" width="1303" height="1" fill="#c0c0c0"/>
<rect x="13" y="552" width="1305" height="4" fill="#b22222"/>
<rect x="13" y="580" width="1305" height="2" fill="#0000ff"/>
<path d="M988.5 558 L996.5 567 L991.3 567 L991.3 579 L985.7 579 L985.7 567 L980.5 567 Z" fill="none" stroke="#ff0000" stroke-width="1.6" shape-rendering="auto"/>
<path d="M1029.5 588 L1037.5 597 L1032.3 597 L1032.3 609 L1026.7 609 L1026.7 597 L1021.5 597 Z" fill="none" stroke="#ff0000" stroke-width="1.6" shape-rendering="auto"/>
<path d="M985.5 459 L993 459 L993 472 L998 472 L989.5 481 L981 472 L985.5 472 Z" fill="none" stroke="#ff0000" stroke-width="1.6" shape-rendering="auto"/>
<g text-rendering="geometricPrecision" shape-rendering="auto" fill="#000">
<text x="985.6" y="466.3" font-size="24">???</text>
<text x="988.8" y="579.8" font-size="24">???</text>
<text x="1030" y="533" font-size="20.5">цель</text>
<path d="M16 116 L23 116 L19.5 120 Z" fill="#000" shape-rendering="crispEdges"/>
<rect x="28" y="112" width="210" height="11" fill="#fff"/>
<text x="28.6" y="121" font-size="10.2" textLength="208.5" lengthAdjust="spacingAndGlyphs">AUDUSDh,H1&#160;&#160;0.82092 0.82266 0.82066 0.82226</text>
<text x="1322" y="114" font-size="9.4" textLength="33" lengthAdjust="spacingAndGlyphs">0.84010</text>
<text x="1322" y="147" font-size="9.4" textLength="33" lengthAdjust="spacingAndGlyphs">0.83875</text>
<text x="1322" y="180" font-size="9.4" textLength="33" lengthAdjust="spacingAndGlyphs">0.83745</text>
<text x="1322" y="213" font-size="9.4" textLength="33" lengthAdjust="spacingAndGlyphs">0.83615</text>
<text x="1322" y="246" font-size="9.4" textLength="33" lengthAdjust="spacingAndGlyphs">0.83480</text>
<text x="1322" y="279" font-size="9.4" textLength="33" lengthAdjust="spacingAndGlyphs">0.83350</text>
<text x="1322" y="312" font-size="9.4" textLength="33" lengthAdjust="spacingAndGlyphs">0.83220</text>
<text x="1322" y="345" font-size="9.4" textLength="33" lengthAdjust="spacingAndGlyphs">0.83085</text>
<text x="1322" y="378" font-size="9.4" textLength="33" lengthAdjust="spacingAndGlyphs">0.82955</text>
<text x="1322" y="411" font-size="9.4" textLength="33" lengthAdjust="spacingAndGlyphs">0.82825</text>
<text x="1322" y="444" font-size="9.4" textLength="33" lengthAdjust="spacingAndGlyphs">0.82690</text>
<text x="1322" y="477" font-size="9.4" textLength="33" lengthAdjust="spacingAndGlyphs">0.82560</text>
<text x="1322" y="510" font-size="9.4" textLength="33" lengthAdjust="spacingAndGlyphs">0.82430</text>
<text x="1322" y="543" font-size="9.4" textLength="33" lengthAdjust="spacingAndGlyphs">0.82295</text>
<text x="1322" y="576" font-size="9.4" textLength="33" lengthAdjust="spacingAndGlyphs">0.82165</text>
<text x="1322" y="609" font-size="9.4" textLength="33" lengthAdjust="spacingAndGlyphs">0.82035</text>
<text x="1322" y="642" font-size="9.4" textLength="33" lengthAdjust="spacingAndGlyphs">0.81900</text>
<text x="1322" y="675" font-size="9.4" textLength="33" lengthAdjust="spacingAndGlyphs">0.81770</text>
<text x="12" y="688" font-size="9.2">8 Dec 2014</text>
<text x="76" y="688" font-size="9.2">8 Dec 16:00</text>
<text x="140" y="688" font-size="9.2">9 Dec 00:00</text>
<text x="204" y="688" font-size="9.2">9 Dec 08:00</text>
<text x="268" y="688" font-size="9.2">9 Dec 16:00</text>
<text x="332" y="688" font-size="9.2">10 Dec 00:00</text>
<text x="396" y="688" font-size="9.2">10 Dec 08:00</text>
<text x="460" y="688" font-size="9.2">10 Dec 16:00</text>
<text x="524" y="688" font-size="9.2">11 Dec 00:00</text>
<text x="588" y="688" font-size="9.2">11 Dec 08:00</text>
<text x="652" y="688" font-size="9.2">11 Dec 16:00</text>
<text x="716" y="688" font-size="9.2">12 Dec 00:00</text>
<text x="780" y="688" font-size="9.2">12 Dec 08:00</text>
<text x="844" y="688" font-size="9.2">12 Dec 16:00</text>
<text x="908" y="688" font-size="9.2">15 Dec 00:00</text>
<text x="972" y="688" font-size="9.2">15 Dec 08:00</text>
<text x="1036" y="688" font-size="9.2">15 Dec 16:00</text>
</g>
<rect x="1318" y="394" width="41" height="11" fill="#0000ff"/>
<text x="1322" y="402.6" font-size="9.4" fill="#fff" textLength="33" lengthAdjust="spacingAndGlyphs">0.82856</text>
<rect x="1318" y="471" width="41" height="11" fill="#ff0000"/>
<text x="1322" y="479.6" font-size="9.4" fill="#fff" textLength="33" lengthAdjust="spacingAndGlyphs">0.82549</text>
<rect x="1318" y="554" width="41" height="11" fill="#000"/>
<text x="1322" y="562.6" font-size="9.4" fill="#fff" textLength="33" lengthAdjust="spacingAndGlyphs">0.82226</text>
<rect x="1318" y="548" width="41" height="11" fill="#b22222"/>
<text x="1322" y="556.6" font-size="9.4" fill="#fff" textLength="33" lengthAdjust="spacingAndGlyphs">0.82240</text>
<rect x="1318" y="575" width="41" height="11" fill="#0000ff"/>
<text x="1322" y="583.6" font-size="9.4" fill="#fff" textLength="33" lengthAdjust="spacingAndGlyphs">0.82133</text>
</svg>
<svg class="abs" style="left:0;top:0" width="1369" height="744" viewBox="0 0 1369 744" font-family="Liberation Sans, sans-serif">
<defs>
<pattern id="hatch" width="2" height="2" patternUnits="userSpaceOnUse"><rect width="2" height="2" fill="#fafafa"/><rect width="1" height="1" fill="#ececec"/><rect x="1" y="1" width="1" height="1" fill="#ececec"/></pattern>
<linearGradient id="gplus" x1="0" y1="0" x2="0" y2="1"><stop offset="0" stop-color="#7bf07b"/><stop offset="0.5" stop-color="#20d020"/><stop offset="1" stop-color="#0a9a0a"/></linearGradient>
<linearGradient id="gwin" x1="0" y1="0" x2="0" y2="1"><stop offset="0" stop-color="#ffffff"/><stop offset="1" stop-color="#d8e6f6"/></linearGradient>
<linearGradient id="gmdi" x1="0" y1="0" x2="0" y2="1"><stop offset="0" stop-color="#f4f8fe"/><stop offset="0.5" stop-color="#e2ecfa"/><stop offset="1" stop-color="#d2e0f4"/></linearGradient>
<linearGradient id="ggold" x1="0" y1="0" x2="1" y2="1"><stop offset="0" stop-color="#fbe27a"/><stop offset="0.6" stop-color="#eab830"/><stop offset="1" stop-color="#b8741a"/></linearGradient>
<linearGradient id="gfold" x1="0" y1="0" x2="0" y2="1"><stop offset="0" stop-color="#fff3b0"/><stop offset="1" stop-color="#f0c63c"/></linearGradient>
<linearGradient id="gbtn" x1="0" y1="0" x2="0" y2="1"><stop offset="0" stop-color="#f4f4f4"/><stop offset="1" stop-color="#dcdcdc"/></linearGradient>
<radialGradient id="gclock" cx="0.4" cy="0.35" r="0.7"><stop offset="0" stop-color="#4aa0ff"/><stop offset="1" stop-color="#0a4cc0"/></radialGradient>
<g id="plus"><path d="M5 0h4v4.5h4.5v4h-4.5v4.5h-4v-4.5h-4.5v-4h4.5z" fill="url(#gplus)" stroke="#0a8a0a" stroke-width="0.8"/></g>
<g id="dd"><path d="M0 0h6l-3 3.2z" fill="#000"/></g>
<g id="axes" stroke="#5a5a5a" stroke-width="1" fill="none"><path d="M3.5 3.500v13M1 14.500h13"/><path d="M1.800 5.200L3.500 3L5.200 5.200M12.300 12.800L14.500 14.500L12.300 16.200" stroke-width="1"/></g>
<g id="grip" fill="#a8a8a8"><rect y="0" width="3" height="1"/><rect y="2" width="3" height="1"/><rect y="4" width="3" height="1"/><rect y="6" width="3" height="1"/><rect y="8" width="3" height="1"/><rect y="10" width="3" height="1"/><rect y="12" width="3" height="1"/><rect y="14" width="3" height="1"/><rect y="16" width="3" height="1"/><rect y="18" width="3" height="1"/></g>
<g id="pressed"><rect x="0" y="0" width="25" height="22" fill="url(#hatch)"/><rect x="0" y="0" width="25" height="1" fill="#8c8c8c"/><rect x="0" y="0" width="1" height="22" fill="#8c8c8c"/><rect x="24" y="1" width="1" height="21" fill="#fff"/><rect x="1" y="21" width="24" height="1" fill="#fff"/></g>
</defs>
<g shape-rendering="crispEdges">
<!-- window edges -->
<rect x="0" y="0" width="1" height="744" fill="#3f8f6a"/>
<rect x="1366" y="0" width="3" height="744" fill="#ffffff"/>
<!-- separators -->
<rect x="8" y="51" width="1353" height="1" fill="#a0a0a0"/><rect x="8" y="52" width="1353" height="1" fill="#fbfbfb"/>
<rect x="8" y="78" width="843" height="1" fill="#a0a0a0"/><rect x="8" y="79" width="844" height="1" fill="#fbfbfb"/>
<rect x="850" y="53" width="1" height="26" fill="#a0a0a0"/><rect x="851" y="53" width="1" height="27" fill="#fbfbfb"/>
<rect x="488" y="53" width="1" height="25" fill="#a0a0a0"/><rect x="489" y="53" width="1" height="25" fill="#fbfbfb"/>
<rect x="310" y="80" width="1" height="25" fill="#a0a0a0"/><rect x="311" y="80" width="1" height="25" fill="#fbfbfb"/>
<rect x="571" y="80" width="1" height="25" fill="#a0a0a0"/><rect x="572" y="80" width="1" height="25" fill="#fbfbfb"/>
<g fill="#a0a0a0"><rect x="91" y="55" width="1" height="21"/><rect x="237" y="55" width="1" height="21"/><rect x="583" y="55" width="1" height="21"/><rect x="673" y="55" width="1" height="21"/><rect x="735" y="55" width="1" height="21"/><rect x="73" y="82" width="1" height="21"/></g>
<use href="#grip" x="10" y="56"/><use href="#grip" x="492" y="56"/><use href="#grip" x="10" y="83"/><use href="#grip" x="314" y="83"/>
<!-- pressed buttons -->
<use href="#pressed" x="16" y="81"/><use href="#pressed" x="432" y="81"/><use href="#pressed" x="526" y="54"/><use href="#pressed" x="678" y="54"/><use href="#pressed" x="706" y="54"/>
</g>
<!-- title bar -->
<g>
<path d="M9.5 17 C9 11 13 8 18 8.2 C23 8.4 26.5 11.5 26 15.5 C25.6 18.5 22 18.5 19.5 18.2 C16 17.8 13 21.5 10.8 20.8 C9.8 20.2 9.6 18.5 9.5 17Z" fill="#b8201c"/>
<path d="M12 13 C14 9.5 19 8.8 23 10.5 C20 10 15 10.5 12 13Z" fill="#e2605a"/>
<text x="11.5" y="18.5" font-size="9.5" font-style="italic" font-weight="bold" fill="#fff" font-family="Liberation Serif, serif">fx</text>
<rect x="1273" y="13" width="8" height="2.4" fill="#111" shape-rendering="crispEdges"/>
<path d="M1299.5 8.5h9v6h-9z" fill="none" stroke="#111" stroke-width="1" shape-rendering="crispEdges"/><rect x="1299" y="8" width="10" height="2" fill="#111" shape-rendering="crispEdges"/>
<path d="M1336.3 8.3l7.400 6.600M1343.700 8.300l-7.400 6.600" stroke="#fff" stroke-width="1.800" fill="none"/>
</g>
<!-- menu icon -->
<g>
<rect x="13.5" y="33.5" width="11.5" height="8.5" rx="1" fill="#f4f8fe" stroke="#5b8fe0" stroke-width="1" stroke-dasharray="1.5 0.7"/>
<path d="M15.5 37.5h2l1-1.500l1.200 2.500l1-1.500h2" stroke="#6a9ae0" stroke-width="0.8" fill="none"/>
<rect x="16.5" y="38.500" width="10.500" height="8.500" rx="1" fill="#fbfdff" stroke="#5b8fe0" stroke-width="1" stroke-dasharray="1.5 0.7"/>
<path d="M18.300 42.500l1.300 2l1.300-2.500l1.300 2.800l1.300-2.800l1.300 2.500" stroke="#6a9ae0" stroke-width="0.8" fill="none"/>
</g>
<!-- MDI buttons -->
<g>
<rect x="1304.5" y="32.5" width="17" height="17" fill="url(#gmdi)" stroke="#93a4bf"/>
<rect x="1323.5" y="32.5" width="17" height="17" fill="url(#gmdi)" stroke="#93a4bf"/>
<rect x="1342.5" y="32.5" width="17" height="17" fill="url(#gmdi)" stroke="#93a4bf"/>
<rect x="1309" y="43" width="7" height="2" fill="#5a6370"/>
<path d="M1330.5 37.5h6v4.5h-6zM1327.5 40.5h6v4.5h-6z" fill="#e6eefa" stroke="#5a6370" stroke-width="1.2"/>
<path d="M1347.5 37.5l7 7M1354.5 37.5l-7 7" stroke="#5a6370" stroke-width="1.9" fill="none"/>
</g>
<!-- search box & chat -->
<g>
<rect x="1157.5" y="53.5" width="172" height="23" fill="#fff" stroke="#ababab"/>
<circle cx="1320.5" cy="62" r="3.6" fill="#fff" stroke="#2f6fd0" stroke-width="1.5"/><path d="M1318 65l-4.5 5" stroke="#2f6fd0" stroke-width="2.2" stroke-linecap="round"/>
<rect x="1330.5" y="53.5" width="29" height="23" fill="url(#gbtn)" stroke="#c0c0c0"/>
<path d="M1337.5 58h13.5a1 1 0 0 1 1 1v10.5a1 1 0 0 1-1 1h-7.5l-3 3.2v-3.2h-3a1 1 0 0 1-1-1v-10.5a1 1 0 0 1 1-1z" fill="#6b87b8"/>
<text x="1341.3" y="68.6" font-size="10.5" font-weight="bold" fill="#fff">4</text>
</g>
<!-- toolbar 1 icons -->
<g>
<!-- new chart -->
<rect x="19.5" y="58.5" width="12" height="10" rx="1.3" fill="url(#gwin)" stroke="#3a7bc4" stroke-width="1.2"/><path d="M23 61v5M21.8 62.2L23 61l1.2 1.2M21.8 64.8L23 66l1.2-1.2" stroke="#7a9cc0" stroke-width="0.8" fill="none"/>
<use href="#plus" x="24.3" y="60.8" transform="translate(24.3 60.8) scale(0.87) translate(-24.3 -60.8)"/>
<use href="#dd" x="40.5" y="65"/>
<!-- profiles -->
<rect x="59.5" y="63.5" width="13" height="10" rx="1.3" fill="url(#gwin)" stroke="#3a7bc4" stroke-width="1.2"/>
<rect x="56.5" y="58.5" width="13" height="10" rx="1.3" fill="url(#gwin)" stroke="#3a7bc4" stroke-width="1.2"/>
<path d="M59.500 60.500v5M58.400 61.700l1.100-1.200l1.100 1.200M58.400 64.300l1.100 1.200l1.100-1.200M60.500 66h7.500M66.800 64.900l1.200 1.100l-1.200 1.100M62 71h8.500M63.200 69.900l-1.200 1.100l1.200 1.100M69.300 69.900l1.200 1.100l-1.200 1.100" stroke="#7a9cc0" stroke-width="0.8" fill="none"/>
<use href="#dd" x="77.5" y="65"/>
<!-- market watch -->
<rect x="100.5" y="58.5" width="15" height="15" rx="1.5" fill="#fff" stroke="#5b9be0" stroke-width="1.3"/>
<path d="M103 71.5h10M109 61h5M109 63h5" stroke="#e0e4ea" stroke-width="0.8"/>
<path d="M105.5 60.2l3.3 3.4h-1.8v2.6h-3v-2.6h-1.8z" fill="#22a822" stroke="#0d7a0d" stroke-width="0.5"/>
<path d="M109.8 71.3l3.3-3.4h-1.8v-2.6h-3v2.6h-1.8z" fill="#f06030" stroke="#c03c10" stroke-width="0.5"/>
<!-- data window -->
<circle cx="136.5" cy="66.3" r="4.8" fill="none" stroke="#606060" stroke-width="1.4"/><path d="M136.5 59v5M136.5 68.6v5M129.2 66.3h5M138.8 66.3h5" stroke="#606060" stroke-width="1.4"/>
<!-- navigator -->
<path d="M155.5 60.5a1.5 1.5 0 0 1 1.5-1.5h3l1.5 1.8h4a1 1 0 0 1 1 1v6.2h-11z" fill="url(#gfold)" stroke="#c09420" stroke-width="0.9"/>
<path d="M159.5 69.5v4.5" stroke="#555" stroke-width="1" stroke-dasharray="1 1"/>
<path d="M167.8 62.6l1.7 3.5l3.8 0.5l-2.8 2.7l0.7 3.8l-3.4-1.8l-3.4 1.8l0.7-3.8l-2.8-2.7l3.8-0.5z" fill="#f6d040" stroke="#b07c10" stroke-width="0.9"/>
<!-- terminal -->
<rect x="184.5" y="59.5" width="15" height="13" rx="1.3" fill="#fff" stroke="#2f6fc4" stroke-width="1.4"/>
<rect x="185.5" y="60.5" width="3" height="11" fill="#5b95dc"/>
<path d="M190 62.5h8.5M190 64.5h8.5M190 66.5h8.5M190 68.5h8.5" stroke="#c8d8f4" stroke-width="0.8"/>
<rect x="189.5" y="62" width="1.2" height="1.2" fill="#e02020"/><rect x="189.5" y="64" width="1.2" height="1.2" fill="#222"/><rect x="189.5" y="66" width="1.2" height="1.2" fill="#222"/><rect x="189.5" y="68" width="1.2" height="1.2" fill="#e02020"/>
<!-- tester -->
<rect x="212.5" y="58.5" width="12" height="13" rx="1" fill="#fcfbf6" stroke="#b8ad90" stroke-width="1"/>
<path d="M215 60.5v6M221.5 60.5v6M214 62h9" stroke="#777" stroke-width="0.8"/>
<path d="M224 70.5l5.2 4.6" stroke="#d0a020" stroke-width="2.4" stroke-linecap="round"/>
<circle cx="220.3" cy="67" r="4.6" fill="#cfe4f8" fill-opacity="0.85" stroke="#4a90dc" stroke-width="1.3"/>
<rect x="219" y="64.5" width="2.6" height="4.5" fill="#8aa0b8"/>
<!-- new order -->
<path d="M247.5 58.5h8l3 3v10h-11z" fill="#fff" stroke="#8a8a8a" stroke-width="1"/><path d="M255.5 58.5v3h3" fill="none" stroke="#8a8a8a" stroke-width="0.8"/>
<path d="M249.5 61.5h3M249.5 64h5M249.5 66.5h3" stroke="#a0a0a0" stroke-width="1"/>
<use href="#plus" x="250.5" y="63.5" transform="translate(250.5 63.5) scale(0.9) translate(-250.5 -63.5)"/>
<!-- gold book -->
<path d="M357.5 59l10 7.2l-6.2 7.3l-9-5.8z" fill="url(#ggold)" stroke="#a8681a" stroke-width="0.9"/>
<path d="M352.3 67.7l9 5.8l6.2-7.3l0.3 1.3l-6.3 7.3l-9.3-5.8z" fill="#c88a2a" stroke="#8a5410" stroke-width="0.5"/>
<!-- auto trading -->
<path d="M380 66l10.5-1l4 2.5l-4.5 6.3l-5-1.2z" fill="#f4d648" stroke="#c8a020" stroke-width="0.7"/>
<ellipse cx="387" cy="62.6" rx="7.8" ry="3" fill="#4a9fdc" stroke="#2a7ab8" stroke-width="0.6"/>
<path d="M383 62c0.3-3.8 2.3-4.6 4-4.6s3.8 0.8 4.2 4.4z" fill="#5fb2ea" stroke="#2a7ab8" stroke-width="0.6"/>
<circle cx="391.5" cy="69.7" r="4" fill="#e02818" stroke="#b01808" stroke-width="0.5"/><rect x="389.8" y="68" width="3.4" height="3.4" fill="#fff"/>
<!-- bar chart -->
<use href="#axes" x="503" y="57"/>
<path d="M510 68h2.5v-8h2.5" fill="none" stroke="#109010" stroke-width="1.5"/>
<!-- candle chart -->
<use href="#axes" x="531" y="57"/>
<path d="M540.5 58v12" stroke="#0a900a" stroke-width="1.2"/><rect x="538.3" y="60.3" width="4.4" height="7.2" fill="#30d830" stroke="#0a900a" stroke-width="0.8"/>
<!-- line chart -->
<use href="#axes" x="559" y="57"/>
<path d="M561 68.5c2-3 4-6 6.5-5.5c2 0.4 3.5 3 5.5 4" fill="none" stroke="#109010" stroke-width="1.3"/>
<!-- zoom in/out -->
<path d="M602 68.5l5.5 4.8" stroke="#d8a820" stroke-width="2.6" stroke-linecap="round"/><circle cx="598" cy="64" r="5.5" fill="#d4e8fa" stroke="#3a88d8" stroke-width="1.3"/><path d="M595 64h6M598 61v6" stroke="#4a86b8" stroke-width="1.6"/>
<path d="M630 68.5l5.5 4.8" stroke="#d8a820" stroke-width="2.6" stroke-linecap="round"/><circle cx="626" cy="64" r="5.5" fill="#d4e8fa" stroke="#3a88d8" stroke-width="1.3"/><path d="M623 64h6" stroke="#4a86b8" stroke-width="1.6"/>
<!-- tile -->
<rect x="648" y="58" width="8" height="8" rx="0.8" fill="#38a018"/><rect x="656" y="58" width="8" height="8" rx="0.8" fill="#2050d8"/><rect x="648" y="66" width="8" height="8" rx="0.8" fill="#2050d8"/><rect x="656" y="66" width="8" height="8" rx="0.8" fill="#38a018"/>
<g fill="#fff"><rect x="649.5" y="61" width="5" height="3.6"/><rect x="657.5" y="61" width="5" height="3.6"/><rect x="649.5" y="69" width="5" height="3.6"/><rect x="657.5" y="69" width="5" height="3.6"/></g>
<!-- autoscroll -->
<use href="#axes" x="683" y="57"/><path d="M691.5 62.5l3.4 3.2l-3.4 3.2z" fill="#50e050" stroke="#109010" stroke-width="0.9"/>
<!-- chart shift -->
<use href="#axes" x="711" y="57"/><path d="M720.5 60v9.5" stroke="#1a6aa8" stroke-width="1.4"/><path d="M721.3 65.8l2.8-2.3v1.5h1.8v1.6h-1.8v1.5z" fill="#e04810"/>
<!-- indicators -->
<path d="M745.5 58.5h8l3 3v10h-11z" fill="#fff" stroke="#8a8a8a" stroke-width="1"/><path d="M753.5 58.5v3h3" fill="none" stroke="#8a8a8a" stroke-width="0.8"/>
<path d="M748.5 62v6M748 63h2M748 67h2" stroke="#665" stroke-width="1"/>
<use href="#plus" x="749" y="63.5" transform="translate(749 63.5) scale(0.9) translate(-749 -63.5)"/>
<use href="#dd" x="764.5" y="65"/>
<!-- clock -->
<circle cx="789" cy="66" r="7.6" fill="url(#gclock)"/><circle cx="789" cy="66" r="5.4" fill="#f4f6fa"/><path d="M788.6 62.2v4l3.2 0.8" fill="none" stroke="#222" stroke-width="1.2"/>
<use href="#dd" x="801.5" y="65"/>
<!-- templates -->
<rect x="818.5" y="59.5" width="15" height="13" rx="0.8" fill="#fff" stroke="#3a78c8" stroke-width="1.3"/><rect x="819" y="60" width="14" height="2.2" fill="#5a98e0"/><path d="M819 67h14" stroke="#3a78c8" stroke-width="1"/>
<path d="M820.5 65.5l2-0.3l2-1.5l2 0.8l2 0.3l2-1.2" fill="none" stroke="#b02010" stroke-width="1.2"/><path d="M821 70.8l2-0.5l2 0.4l2-1.8l2 0.3l2 1.6" fill="none" stroke="#109010" stroke-width="1.2"/>
<use href="#dd" x="838.5" y="65"/>
</g>
<!-- toolbar 2 icons -->
<g>
<path d="M24 86v12l2.8-2.6l2.2 4.8l1.8-0.8l-2.2-4.7h3.6z" fill="#484848"/>
<path d="M56.5 86v5.5M56.5 95.5v5.5M49 93.5h5.5M58.5 93.5h5.5M56 93.5h1" stroke="#555" stroke-width="1.2"/>
<path d="M90.5 87v13" stroke="#555" stroke-width="1.3"/>
<path d="M113 93.5h12" stroke="#555" stroke-width="1.3"/>
<path d="M141 100l12-12" stroke="#555" stroke-width="1.3"/>
<path d="M166.7 94.3l7.9-7M172 99.9l8.8-8.8" stroke="#555" stroke-width="1" fill="none"/><path d="M171.6 90.2l-2.2 9.6M175 87.8l-2.3 9.8M178.6 85.2l-2.4 9.8" stroke="#555" stroke-width="0.9" fill="none"/>
<text x="177.6" y="101.8" font-size="6.3" font-weight="bold" fill="#444">E</text>
<path d="M196 86.5h13M196 89.5h13M196 93.5h13M196 97.5h9" stroke="#666" stroke-width="1" stroke-dasharray="1 1" shape-rendering="crispEdges"/>
<text x="205.8" y="101.8" font-size="6.3" font-weight="bold" fill="#444">F</text>
<text x="226.6" y="97.8" font-size="12" fill="#555" stroke="#555" stroke-width="0.35">A</text>
<rect x="253.5" y="87.5" width="11" height="12" fill="none" stroke="#555" stroke-width="1" stroke-dasharray="1 1" shape-rendering="crispEdges"/><rect x="252.6" y="86.6" width="1.8" height="1.8" fill="#555"/>
<path d="M255.5 90.8h7.5M259.2 90.8v7" stroke="#555" stroke-width="1.7"/>
<path d="M280 89.5l3.5-2.7l3.5 2.7l-3.5 2.3zM287 96.8l3.5-2.3l3.5 2.3l-3.5 2.7z" fill="#555"/><path d="M282.5 94.5l2 2l4.5-5" fill="none" stroke="#555" stroke-width="1.2"/>
<use href="#dd" x="298.8" y="92"/>
</g>
<!-- tab bar -->
<g shape-rendering="crispEdges">
<rect x="8" y="696" width="1353" height="19" fill="#f0f0f0"/>
<rect x="8" y="715" width="1353" height="1" fill="#fcfcfc"/>
<rect x="8" y="696" width="2" height="19" fill="#8a8a8a"/>
<rect x="532" y="694" width="89" height="20" fill="#fff"/>
<rect x="532" y="695" width="2" height="19" fill="#000"/><rect x="619" y="695" width="2" height="19" fill="#000"/><rect x="532" y="712" width="89" height="2" fill="#000"/>
<g fill="#6e6e6e"><rect x="104" y="698" width="1" height="13"/><rect x="188" y="698" width="1" height="13"/><rect x="280" y="698" width="1" height="13"/><rect x="364" y="698" width="1" height="13"/><rect x="448" y="698" width="1" height="13"/><rect x="700" y="698" width="1" height="13"/><rect x="784" y="698" width="1" height="13"/><rect x="878" y="698" width="1" height="13"/><rect x="975" y="698" width="1" height="13"/><rect x="1072" y="698" width="1" height="13"/></g>
<g fill="#a8a8a8"><rect x="635" y="719" width="1" height="16"/><rect x="750" y="719" width="1" height="16"/><rect x="853" y="719" width="1" height="16"/><rect x="924" y="719" width="1" height="16"/><rect x="996" y="719" width="1" height="16"/><rect x="1064" y="719" width="1" height="16"/><rect x="1133" y="719" width="1" height="16"/><rect x="1199" y="719" width="1" height="16"/></g><g fill="#ffffff"><rect x="636" y="719" width="1" height="16"/><rect x="751" y="719" width="1" height="16"/><rect x="854" y="719" width="1" height="16"/><rect x="925" y="719" width="1" height="16"/><rect x="997" y="719" width="1" height="16"/><rect x="1065" y="719" width="1" height="16"/><rect x="1134" y="719" width="1" height="16"/><rect x="1200" y="719" width="1" height="16"/></g>
</g>
<path d="M1336.5 702.3v5.6l-3.6-2.8zM1350 702.3v5.6l3.6-2.8z" fill="#a2a2a2"/>
<!-- connection bars -->
<g shape-rendering="crispEdges">
<rect x="1205" y="721" width="2" height="9" fill="#557700"/><rect x="1205" y="731" width="2" height="2" fill="#002850"/>
<rect x="1208" y="721" width="2" height="8" fill="#557700"/><rect x="1208" y="730" width="2" height="3" fill="#002850"/>
<rect x="1211" y="721" width="2" height="7" fill="#557700"/><rect x="1211" y="729" width="2" height="4" fill="#002850"/>
<rect x="1214" y="721" width="2" height="6" fill="#557700"/><rect x="1214" y="728" width="2" height="5" fill="#002850"/>
<rect x="1217" y="721" width="2" height="5" fill="#557700"/><rect x="1217" y="727" width="2" height="6" fill="#002850"/>
<rect x="1220" y="721" width="2" height="4" fill="#557700"/><rect x="1220" y="726" width="2" height="7" fill="#002850"/>
<rect x="1223" y="721" width="2" height="3" fill="#557700"/><rect x="1223" y="725" width="2" height="8" fill="#002850"/>
<rect x="1226" y="721" width="2" height="2" fill="#557700"/><rect x="1226" y="724" width="2" height="9" fill="#002850"/>
</g>
<!-- resize grip -->
<path d="M1349 736l12-12M1353 736l8-8M1357 736l4-4" stroke="#b4b4b4" stroke-width="1.2"/>
<path d="M1350 736l11-11M1354 736l7-7M1358 736l3-3" stroke="#fff" stroke-width="0.8"/>
</svg>
<span class="abs" style="left:552.47px;top:8.98px;font-size:14.2px;line-height:1;white-space:pre;color:#1c1c1c;transform-origin:0 0;transform:scaleX(1.0295);">129859: DivenFX-Main - [AUDUSDh,H1]</span>
<span class="abs" style="left:36.00px;top:35.69px;font-size:11px;line-height:1;white-space:pre;color:#000;transform-origin:0 0;transform:scaleX(1.0892);">Файл</span>
<span class="abs" style="left:82.50px;top:35.69px;font-size:11px;line-height:1;white-space:pre;color:#000;transform-origin:0 0;transform:scaleX(0.9277);">Вид</span>
<span class="abs" style="left:120.00px;top:35.69px;font-size:11px;line-height:1;white-space:pre;color:#000;transform-origin:0 0;transform:scaleX(0.9816);">Вставка</span>
<span class="abs" style="left:180.00px;top:35.69px;font-size:11px;line-height:1;white-space:pre;color:#000;transform-origin:0 0;transform:scaleX(0.9981);">Графики</span>
<span class="abs" style="left:241.00px;top:35.69px;font-size:11px;line-height:1;white-space:pre;color:#000;transform-origin:0 0;transform:scaleX(0.9825);">Сервис</span>
<span class="abs" style="left:296.50px;top:35.69px;font-size:11px;line-height:1;white-space:pre;color:#000;transform-origin:0 0;transform:scaleX(1.0022);">Окно</span>
<span class="abs" style="left:340.50px;top:35.69px;font-size:11px;line-height:1;white-space:pre;color:#000;transform-origin:0 0;transform:scaleX(0.9765);">Справка</span>
<span class="abs" style="left:268.50px;top:60.69px;font-size:11px;line-height:1;white-space:pre;color:#000;transform-origin:0 0;transform:scaleX(1.0433);">Новый Ордер</span>
<span class="abs" style="left:402.50px;top:60.69px;font-size:11px;line-height:1;white-space:pre;color:#000;transform-origin:0 0;transform:scaleX(1.0594);">Авто-торговля</span>
<span class="abs" style="left:325.70px;top:88.79px;font-size:9.7px;line-height:1;white-space:pre;color:#3a3a3a;transform-origin:0 0;transform:scaleX(0.9794);">M1</span>
<span class="abs" style="left:353.50px;top:88.79px;font-size:9.7px;line-height:1;white-space:pre;color:#3a3a3a;transform-origin:0 0;transform:scaleX(0.9564);">M5</span>
<span class="abs" style="left:379.70px;top:88.79px;font-size:9.7px;line-height:1;white-space:pre;color:#3a3a3a;transform-origin:0 0;transform:scaleX(0.9373);">M15</span>
<span class="abs" style="left:407.50px;top:88.79px;font-size:9.7px;line-height:1;white-space:pre;color:#3a3a3a;transform-origin:0 0;transform:scaleX(0.9251);">M30</span>
<span class="abs" style="left:438.50px;top:88.79px;font-size:9.7px;line-height:1;white-space:pre;color:#3a3a3a;transform-origin:0 0;transform:scaleX(0.9587);">H1</span>
<span class="abs" style="left:465.00px;top:88.79px;font-size:9.7px;line-height:1;white-space:pre;color:#3a3a3a;transform-origin:0 0;transform:scaleX(1.0773);">H4</span>
<span class="abs" style="left:493.00px;top:88.79px;font-size:9.7px;line-height:1;white-space:pre;color:#3a3a3a;transform-origin:0 0;transform:scaleX(1.0837);">D1</span>
<span class="abs" style="left:520.00px;top:88.79px;font-size:9.7px;line-height:1;white-space:pre;color:#3a3a3a;transform-origin:0 0;transform:scaleX(1.2020);">W1</span>
<span class="abs" style="left:549.00px;top:88.79px;font-size:9.7px;line-height:1;white-space:pre;color:#3a3a3a;transform-origin:0 0;transform:scaleX(0.9290);">MN</span>
<span class="abs" style="left:22.00px;top:698.86px;font-size:10.8px;line-height:1;white-space:pre;color:#6a6a6a;transform-origin:0 0;transform:scaleX(0.9326);">EURUSDh,M15</span>
<span class="abs" style="left:113.00px;top:698.86px;font-size:10.8px;line-height:1;white-space:pre;color:#6a6a6a;transform-origin:0 0;transform:scaleX(0.9353);">USDCHFh,H1</span>
<span class="abs" style="left:198.40px;top:698.86px;font-size:10.8px;line-height:1;white-space:pre;color:#6a6a6a;transform-origin:0 0;transform:scaleX(0.9074);">GBPUSDh,M15</span>
<span class="abs" style="left:291.40px;top:698.86px;font-size:10.8px;line-height:1;white-space:pre;color:#6a6a6a;transform-origin:0 0;transform:scaleX(0.9220);">USDJPYh,H1</span>
<span class="abs" style="left:375.80px;top:698.86px;font-size:10.8px;line-height:1;white-space:pre;color:#6a6a6a;transform-origin:0 0;transform:scaleX(0.9144);">EURJPYh,H1</span>
<span class="abs" style="left:458.60px;top:698.86px;font-size:10.8px;line-height:1;white-space:pre;color:#6a6a6a;transform-origin:0 0;transform:scaleX(0.9205);">GBPCHFh,H4</span>
<span class="abs" style="left:629.30px;top:698.86px;font-size:10.8px;line-height:1;white-space:pre;color:#6a6a6a;transform-origin:0 0;transform:scaleX(0.9067);">GBPJPYh,H4</span>
<span class="abs" style="left:709.90px;top:698.86px;font-size:10.8px;line-height:1;white-space:pre;color:#6a6a6a;transform-origin:0 0;transform:scaleX(0.9196);">EURGBPh,H4</span>
<span class="abs" style="left:794.30px;top:698.86px;font-size:10.8px;line-height:1;white-space:pre;color:#6a6a6a;transform-origin:0 0;transform:scaleX(0.9306);">USDCADh,Daily</span>
<span class="abs" style="left:889.90px;top:698.86px;font-size:10.8px;line-height:1;white-space:pre;color:#6a6a6a;transform-origin:0 0;transform:scaleX(0.9300);">XAUUSDh,Daily</span>
<span class="abs" style="left:986.00px;top:698.86px;font-size:10.8px;line-height:1;white-space:pre;color:#6a6a6a;transform-origin:0 0;transform:scaleX(0.9344);">USDCADh,Daily</span>
<span class="abs" style="left:543.50px;top:698.86px;font-size:10.8px;line-height:1;white-space:pre;color:#000;transform-origin:0 0;transform:scaleX(0.9343);">AUDUSDh,H1</span>
<span class="abs" style="left:10.70px;top:721.69px;font-size:11px;line-height:1;white-space:pre;color:#000;transform-origin:0 0;transform:scaleX(1.0421);">Для справки, нажмите F1</span>
<span class="abs" style="left:641.60px;top:721.69px;font-size:11px;line-height:1;white-space:pre;color:#000;transform-origin:0 0;transform:scaleX(1.0748);">Default</span>
<span class="abs" style="left:757.40px;top:721.69px;font-size:11px;line-height:1;white-space:pre;color:#000;transform-origin:0 0;transform:scaleX(0.9752);">2014.12.15 14:00</span>
<span class="abs" style="left:859.70px;top:721.69px;font-size:11px;line-height:1;white-space:pre;color:#000;transform-origin:0 0;transform:scaleX(0.9795);">O: 0.82194</span>
<span class="abs" style="left:930.80px;top:721.69px;font-size:11px;line-height:1;white-space:pre;color:#000;transform-origin:0 0;transform:scaleX(0.9795);">H: 0.82230</span>
<span class="abs" style="left:1001.30px;top:721.69px;font-size:11px;line-height:1;white-space:pre;color:#000;transform-origin:0 0;transform:scaleX(0.9851);">L: 0.82008</span>
<span class="abs" style="left:1070.30px;top:721.69px;font-size:11px;line-height:1;white-space:pre;color:#000;transform-origin:0 0;transform:scaleX(0.9441);">C: 0.82014</span>
<span class="abs" style="left:1139.40px;top:721.69px;font-size:11px;line-height:1;white-space:pre;color:#000;transform-origin:0 0;transform:scaleX(0.9547);">V: 3646</span>
<span class="abs" style="left:1262.00px;top:721.69px;font-size:11px;line-height:1;white-space:pre;color:#000;transform-origin:0 0;transform:scaleX(1.0187);">8637/4 kb</span><svg class="abs" style="left:0;top:0" width="1369" height="744" viewBox="0 0 1369 744" font-family="Liberation Sans, sans-serif">
<rect x="0" y="728" width="1366" height="16" fill="#3f8966" fill-opacity="0.6"/>
<g fill="#ffffff" fill-opacity="0.22" stroke="#ffffff" stroke-opacity="0.45" stroke-width="1">
<rect x="176.5" y="729.5" width="58" height="16"/><rect x="238.5" y="729.5" width="58" height="16"/><rect x="300.5" y="729.5" width="58" height="16"/><rect x="362.5" y="729.5" width="58" height="16" fill-opacity="0.3" stroke-opacity="0.8"/><rect x="424.5" y="729.5" width="58" height="16"/><rect x="486.5" y="729.5" width="58" height="16"/>
</g>
<!-- start -->
<path d="M12 737l11-1.8v10h-11zM24.3 735l14-2.3v12.5h-14z" fill="#fff"/>
<!-- store -->
<rect x="66" y="733" width="30" height="12" fill="#1a8f1a"/><path d="M74 744v-5h14v5M77.5 739c0-4 7-4 7 0" fill="none" stroke="#fff" stroke-width="1.6"/>
<!-- word -->
<path d="M128 735l17-2.5v12h-17z" fill="#2a5699"/><rect x="145" y="735" width="12" height="10" fill="#fff"/><path d="M147 738h9M147 741h9" stroke="#2a5699" stroke-width="1.3"/>
<text x="131" y="745.5" font-size="9" font-weight="bold" fill="#fff">W</text>
<!-- chrome -->
<circle cx="205.5" cy="748" r="13.5" fill="#e23a2e"/><path d="M205.5 748l-12-6a13.5 13.5 0 0 0 0 12z" fill="#f2c318"/><circle cx="205.5" cy="748" r="6" fill="#fff"/>
<!-- skype -->
<circle cx="266" cy="748" r="14" fill="#00aff0"/><circle cx="266" cy="749" r="6.5" fill="#fff"/><circle cx="266" cy="750" r="3" fill="#00aff0"/>
<!-- yandex-like -->
<rect x="313" y="732" width="32" height="13" fill="#fff"/><circle cx="332" cy="748" r="13.5" fill="#2878c8"/><path d="M322 745c2-8 10-12 18-9c-6 0-10 4-11 10z" fill="#f26a1b"/><circle cx="333" cy="749" r="6" fill="#fff"/>
<!-- mt4 -->
<circle cx="391" cy="750" r="15" fill="#a81c14"/><path d="M380 742c4-5 12-7 20-3c-6-1-14 0-20 3z" fill="#d8584e"/>
<!-- control panel -->
<rect x="437.500" y="734.5" width="17" height="11" fill="#dbeafc" stroke="#3a7ad0"/><rect x="437.500" y="734.5" width="17" height="2.500" fill="#4a90e0"/>
<rect x="446.500" y="738.5" width="16" height="8" fill="#e8f2fe" stroke="#3a7ad0"/><rect x="446.500" y="738.5" width="16" height="2" fill="#4a90e0"/><circle cx="445" cy="745" r="3" fill="#e08a20"/>
<path d="M441 740v4M449 742v3M453 742v3M457 742v3" stroke="#2a5aa0" stroke-width="1"/>
<!-- orange -->
<ellipse cx="515" cy="748" rx="14.5" ry="12.500" fill="#f39a1c"/><ellipse cx="515" cy="742" rx="11" ry="5" fill="#f8b850"/><path d="M504 744h22v5h-22z" fill="#fff"/><path d="M507 744v5M511 744v5M515 744v5M519 744v5M523 744v5" stroke="#f39a1c" stroke-width="1.2"/>
<!-- tray -->
<path d="M1158 744.500l4-4.500l4 4.500z" fill="#fff"/><rect x="1176" y="741" width="14" height="4" fill="#fff"/><path d="M1204 744.500c0-4 10-4 10 0z" fill="#fff"/><rect x="1222" y="741.500" width="17" height="3" fill="#fff"/><circle cx="1225" cy="742.500" r="2" fill="none" stroke="#fff" stroke-width="1"/>
<text x="1307" y="745.500" font-size="12.500" fill="#fff" textLength="27" lengthAdjust="spacingAndGlyphs">19:28</text>
<rect x="1366" y="0" width="3" height="744" fill="#ffffff"/>
</svg>

</div></body></html>
